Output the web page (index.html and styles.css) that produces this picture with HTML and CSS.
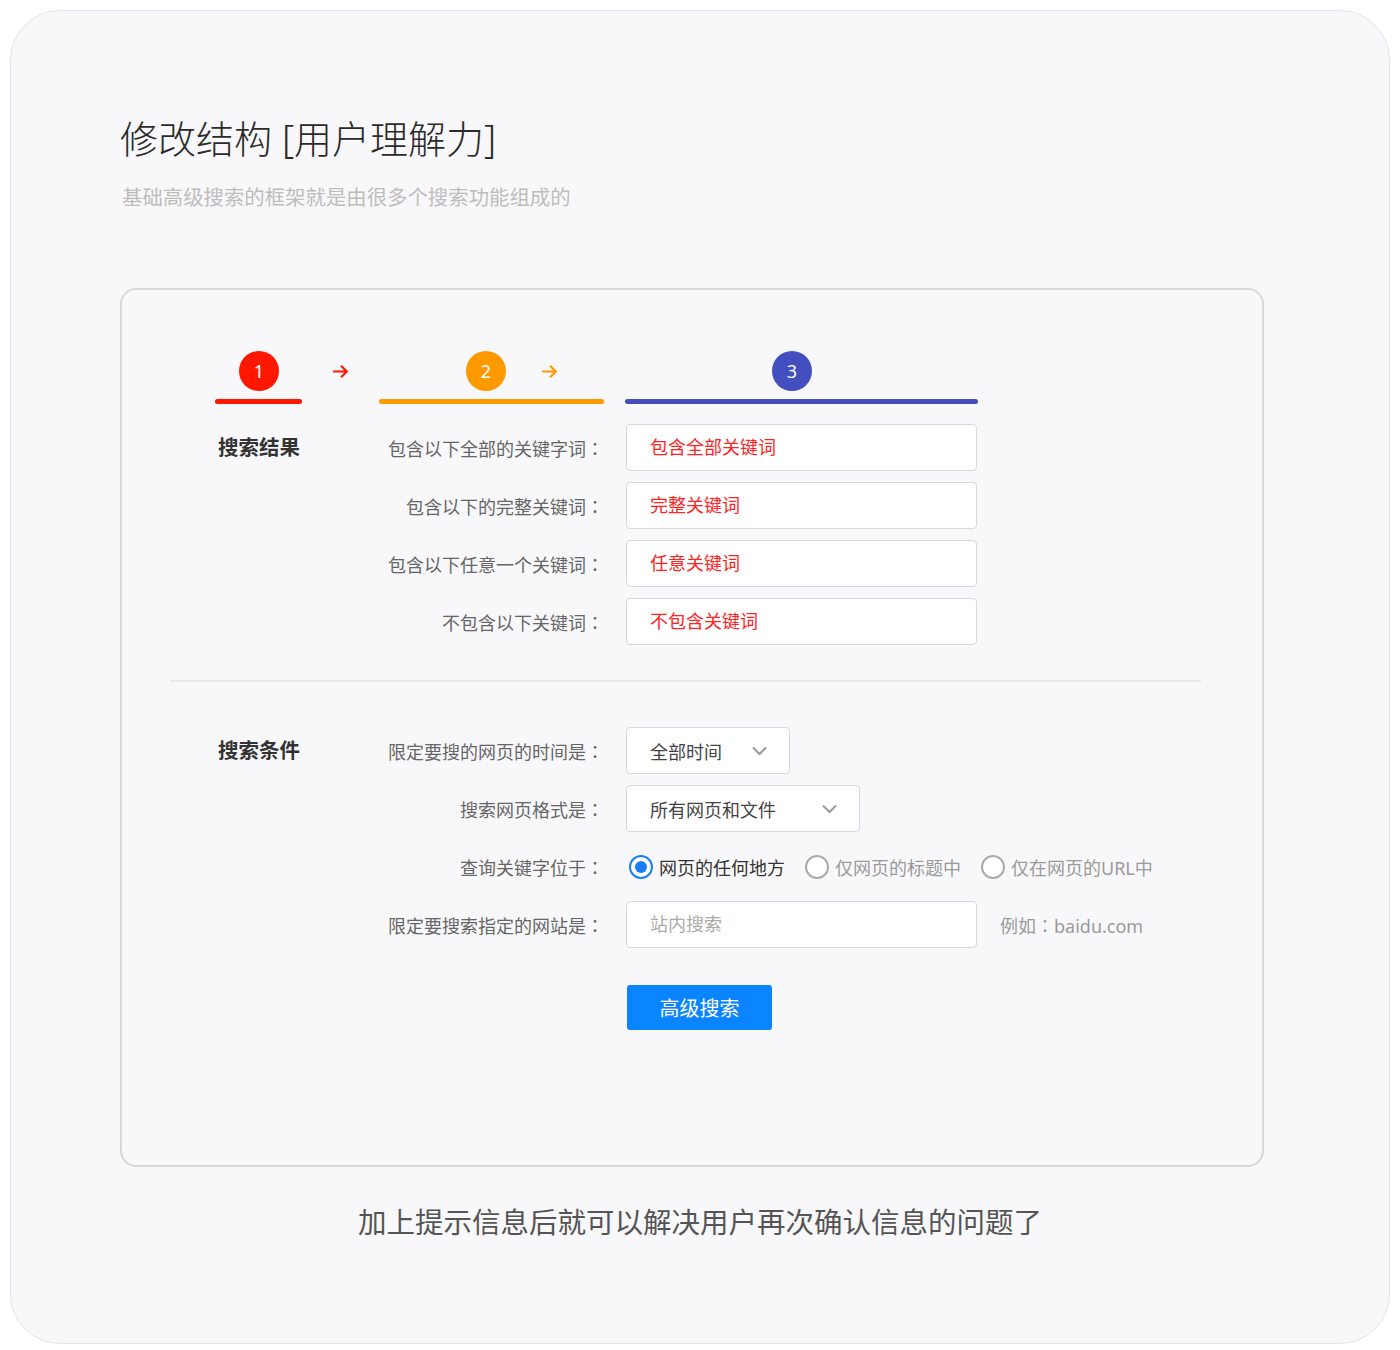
FILE: index.html
```html
<!DOCTYPE html>
<html lang="zh-CN">
<head>
    <meta charset="UTF-8">
    <meta name="viewport" content="width=device-width, initial-scale=1.0">
    <title>修改结构 [用户理解力]</title>
    <link rel="stylesheet" href="styles.css">
</head>
<body>
    <div class="page">
        <h1 class="title">修改结构 [用户理解力]</h1>
        <p class="subtitle">基础高级搜索的框架就是由很多个搜索功能组成的</p>

        <div class="panel">
            <!-- 步骤条 -->
            <div class="steps">
                <div class="step-heads">
                    <span class="num num-1">1</span>
                    <svg class="arrow arrow-1" width="17" height="17" viewBox="0 0 16 16"><path d="M1 8h13M8.5 2.5L14 8l-5.5 5.5" fill="none" stroke="currentColor" stroke-width="2"/></svg>
                    <span class="num num-2">2</span>
                    <svg class="arrow arrow-2" width="17" height="17" viewBox="0 0 16 16"><path d="M1 8h13M8.5 2.5L14 8l-5.5 5.5" fill="none" stroke="currentColor" stroke-width="2"/></svg>
                    <span class="num num-3">3</span>
                </div>
                <div class="step-bars">
                    <span class="bar bar-1"></span>
                    <span class="bar bar-2"></span>
                    <span class="bar bar-3"></span>
                </div>
            </div>

            <div class="section first">
                <div class="section-title">搜索结果</div>
                <div class="rows">
                    <div class="row">
                        <label>包含以下全部的关键字词<span class="colon">：</span></label>
                        <div class="input filled">包含全部关键词</div>
                    </div>
                    <div class="row">
                        <label>包含以下的完整关键词<span class="colon">：</span></label>
                        <div class="input filled">完整关键词</div>
                    </div>
                    <div class="row">
                        <label>包含以下任意一个关键词<span class="colon">：</span></label>
                        <div class="input filled">任意关键词</div>
                    </div>
                    <div class="row">
                        <label>不包含以下关键词<span class="colon">：</span></label>
                        <div class="input filled">不包含关键词</div>
                    </div>
                </div>
            </div>

            <div class="divider"></div>

            <div class="section">
                <div class="section-title">搜索条件</div>
                <div class="rows">
                    <div class="row">
                        <label>限定要搜的网页的时间是<span class="colon">：</span></label>
                        <div class="select select-time">
                            <span>全部时间</span>
                            <svg width="17" height="10" viewBox="0 0 16 10"><path d="M1.5 1.5L8 8l6.5-6.5" fill="none" stroke="#999" stroke-width="2"/></svg>
                        </div>
                    </div>
                    <div class="row">
                        <label>搜索网页格式是<span class="colon">：</span></label>
                        <div class="select select-type">
                            <span>所有网页和文件</span>
                            <svg width="17" height="10" viewBox="0 0 16 10"><path d="M1.5 1.5L8 8l6.5-6.5" fill="none" stroke="#999" stroke-width="2"/></svg>
                        </div>
                    </div>
                    <div class="row">
                        <label>查询关键字位于<span class="colon">：</span></label>
                        <div class="radios">
                            <span class="radio checked"><i></i>网页的任何地方</span>
                            <span class="radio"><i></i>仅网页的标题中</span>
                            <span class="radio"><i></i>仅在网页的URL中</span>
                        </div>
                    </div>
                    <div class="row">
                        <label>限定要搜索指定的网站是<span class="colon">：</span></label>
                        <div class="input placeholder">站内搜索</div>
                        <span class="hint">例如<span class="colon">：</span>baidu.com</span>
                    </div>
                </div>
            </div>

            <button class="submit">高级搜索</button>
        </div>

        <p class="note">加上提示信息后就可以解决用户再次确认信息的问题了</p>
    </div>
</body>
</html>
```

FILE: styles.css
```css
* { margin: 0; padding: 0; box-sizing: border-box; }
body {
    background: #fff;
    padding: 10px;
    font-family: "Noto Sans", "Noto Sans CJK SC", sans-serif;
    color: #333;
    text-spacing-trim: space-all;
}
.page {
    height: 1334px;
    background: #f8f8fa;
    border: 1px solid #e6e6e8;
    border-radius: 50px;
    padding: 99px 0 0 109px;
}
.title {
    font-size: 38px;
    font-weight: 300;
    line-height: 56px;
    color: #2b2b2b;
}
.subtitle {
    margin-top: 17px;
    padding-left: 2px;
    font-size: 20.4px;
    line-height: 28px;
    color: #bdbdbd;
}
.panel {
    width: 1144px;
    margin-top: 77px;
    border: 2px solid #d8d8da;
    border-radius: 16px;
    padding: 61px 48px 135px;
}

/* 步骤条 */
.steps { padding-left: 45px; }
.step-heads {
    display: flex;
    align-items: center;
    height: 40px;
}
.num {
    width: 40px;
    height: 40px;
    border-radius: 50%;
    color: #fff;
    font-size: 18px;
    line-height: 40px;
    text-align: center;
}
.num-1 { background: #ff1700; margin-left: 24px; }
.num-2 { background: #ff9900; margin-left: 117px; }
.num-3 { background: #434fbf; margin-left: 214px; }
.arrow-1 { color: #ff1700; margin-left: 53px; }
.arrow-2 { color: #ff9900; margin-left: 35px; }
.step-bars {
    display: flex;
    margin-top: 8px;
}
.bar {
    height: 5px;
    border-radius: 3px;
}
.bar-1 { width: 87px; background: #ff1700; }
.bar-2 { width: 225px; margin-left: 77px; background: #ff9900; }
.bar-3 { width: 353px; margin-left: 21px; background: #434fbf; }

/* 表单 */
.section {
    display: flex;
    padding-left: 45px;
    margin-top: 45px;
}
.section.first { margin-top: 20px; }
.section-title {
    width: 150px;
    padding-left: 3px;
    font-size: 20.5px;
    font-weight: 700;
    line-height: 47px;
    color: #333;
}
.rows {
    display: flex;
    flex-direction: column;
    gap: 11px;
}
.row {
    display: flex;
    align-items: center;
    height: 47px;
}
.row label {
    width: 239px;
    margin-right: 22px;
    text-align: right;
    font-size: 18px;
    color: #666;
}
.colon {
    display: inline-block;
    width: 1em;
    text-align: center;
    font-family: "Noto Sans CJK TC", sans-serif;
}
.input {
    width: 351px;
    height: 47px;
    background: #fff;
    border: 1px solid #d9d9db;
    border-radius: 4px;
    padding-left: 23px;
    font-size: 18px;
    line-height: 45px;
}
.input.filled { color: #ff2323; }
.input.placeholder { color: #ababab; }
.select {
    display: flex;
    align-items: center;
    justify-content: space-between;
    height: 47px;
    background: #fff;
    border: 1px solid #d9d9db;
    border-radius: 4px;
    padding: 0 21px 0 23px;
    font-size: 18px;
    color: #444;
}
.select-time { width: 164px; }
.select-type { width: 234px; }
.radios {
    display: flex;
    gap: 20px;
    padding-left: 3px;
}
.radio {
    display: flex;
    align-items: center;
    gap: 6px;
    font-size: 18px;
    color: #9a9a9a;
}
.radio i {
    width: 24px;
    height: 24px;
    border: 2px solid #ababab;
    border-radius: 50%;
    background: #fff;
    position: relative;
}
.radio.checked { color: #333; }
.radio.checked i { border-color: #1a7ff5; }
.radio.checked i::after {
    content: "";
    position: absolute;
    left: 4px;
    top: 4px;
    width: 12px;
    height: 12px;
    border-radius: 50%;
    background: #1a7ff5;
}
.hint {
    margin-left: 23px;
    font-size: 18px;
    color: #9a9a9a;
}
.divider {
    width: 1031px;
    height: 2px;
    margin-top: 35px;
    background: #e8e8ea;
}
.submit {
    display: block;
    width: 145px;
    height: 45px;
    margin: 37px 0 0 457px;
    border: none;
    border-radius: 3px;
    background: #0a84ff;
    color: #fff;
    font-family: inherit;
    font-size: 20px;
}
.note {
    margin: 35px 0 0 -109px;
    text-align: center;
    font-size: 28.5px;
    line-height: 40px;
    color: #555;
}
```
